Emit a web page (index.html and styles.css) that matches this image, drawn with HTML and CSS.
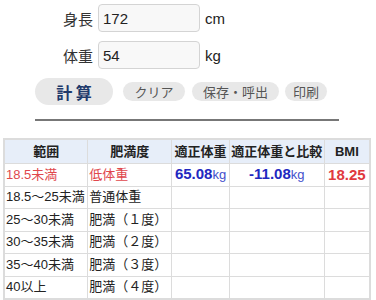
FILE: index.html
```html
<!DOCTYPE html>
<html lang="ja">
<head>
    <meta charset="UTF-8">
    <meta name="viewport" content="width=device-width, initial-scale=1.0">
    <title>BMI計算</title>
    <link rel="stylesheet" href="styles.css">
</head>
<body>
    <div id="form">
        <div class="form-row">
            <label class="label" for="height">身長</label>
            <input class="num-input" id="height" type="text" value="172">
            <span class="unit">cm</span>
        </div>
        <div class="form-row">
            <label class="label" for="weight">体重</label>
            <input class="num-input" id="weight" type="text" value="54">
            <span class="unit">kg</span>
        </div>
    </div>

    <div class="buttons">
        <button class="btn btn-calc">計 算</button>
        <button class="btn btn-clear">クリア</button>
        <button class="btn btn-save">保存・呼出</button>
        <button class="btn btn-print">印刷</button>
    </div>

    <hr class="divider">

    <table class="result">
        <thead>
            <tr>
                <th class="col-range">範囲</th>
                <th class="col-level">肥満度</th>
                <th class="col-ideal">適正体重</th>
                <th class="col-diff">適正体重と比較</th>
                <th class="col-bmi">BMI</th>
            </tr>
        </thead>
        <tbody>
            <tr class="current">
                <td>18.5未満</td>
                <td>低体重</td>
                <td class="ideal"><b>65.08</b><small>kg</small></td>
                <td class="diff"><b>-11.08</b><small>kg</small></td>
                <td class="bmi">18.25</td>
            </tr>
            <tr><td>18.5～25未満</td><td>普通体重</td><td></td><td></td><td></td></tr>
            <tr><td>25～30未満</td><td>肥満（１度）</td><td></td><td></td><td></td></tr>
            <tr><td>30～35未満</td><td>肥満（２度）</td><td></td><td></td><td></td></tr>
            <tr><td>35～40未満</td><td>肥満（３度）</td><td></td><td></td><td></td></tr>
            <tr><td>40以上</td><td>肥満（４度）</td><td></td><td></td><td></td></tr>
        </tbody>
    </table>
</body>
</html>
```

FILE: styles.css
```css
/* General */
body {
    margin: 0;
    padding: 0;
    background: #ffffff;
    color: #222222;
    font-family: "Liberation Sans", Arial, "Noto Sans CJK JP", sans-serif;
}

/* Input form */
#form {
    padding: 4px 0 0 63px;
}

.form-row {
    display: flex;
    align-items: center;
    height: 28px;
    margin-bottom: 9px;
}

.label {
    width: 35px;
    font-size: 15px;
    color: #333333;
}

.num-input {
    box-sizing: border-box;
    width: 102px;
    height: 28px;
    padding: 0 4px;
    border: 1px solid #d4d4d4;
    border-radius: 4px;
    background: #f8f8f8;
    font-family: "Liberation Sans", Arial, sans-serif;
    font-size: 15px;
    color: #222222;
}

.unit {
    margin-left: 5px;
    font-size: 15px;
    color: #222222;
}

/* Buttons */
.buttons {
    display: flex;
    align-items: center;
    padding: 0 0 0 35px;
}

.btn {
    border: none;
    border-radius: 14px;
    background: #e8e8e8;
    font-family: "Noto Sans CJK JP", sans-serif;
    color: #555555;
    padding: 0;
    line-height: 1;
}

.btn-calc {
    width: 78px;
    height: 27px;
    margin-right: 10px;
    font-size: 16px;
    font-weight: bold;
    color: #1f3a6b;
}

.btn-clear {
    width: 62px;
    height: 19px;
    margin-right: 7px;
    font-size: 13px;
}

.btn-save {
    width: 87px;
    height: 19px;
    margin-right: 6px;
    font-size: 13px;
}

.btn-print {
    width: 42px;
    height: 19px;
    font-size: 13px;
}

.divider {
    width: 304px;
    margin: 14px 0 0 35px;
    border: none;
    border-top: 2px solid #777777;
}

/* Result table */
.result {
    width: 368px;
    margin: 17px 0 0 3px;
    border-collapse: collapse;
    border: 2px solid #dcdcdc;
    font-size: 13px;
}

.result th,
.result td {
    border: 1px solid #dcdcdc;
    padding: 0 1px;
    height: 21.5px;
    line-height: 16px;
    font-family: "Liberation Sans", Arial, "Noto Sans CJK JP", sans-serif;
    white-space: nowrap;
}

.result th {
    height: 23px;
    background: #e7eef9;
    color: #222222;
    font-weight: bold;
}

.col-range { width: 82px; }
.col-level { width: 84px; }
.col-ideal { width: 57px; }
.col-diff  { width: 93px; }
.col-bmi   { width: 47px; }

.current td {
    color: #e0474c;
}

.result td.ideal,
.result td.diff {
    color: #2228c0;
    text-align: center;
    font-size: 15px;
}

.ideal small,
.diff small {
    font-size: 13px;
    color: #4450cc;
}

.result td.bmi {
    text-align: center;
    font-size: 15px;
    font-weight: bold;
    color: #e0393e;
}
```
